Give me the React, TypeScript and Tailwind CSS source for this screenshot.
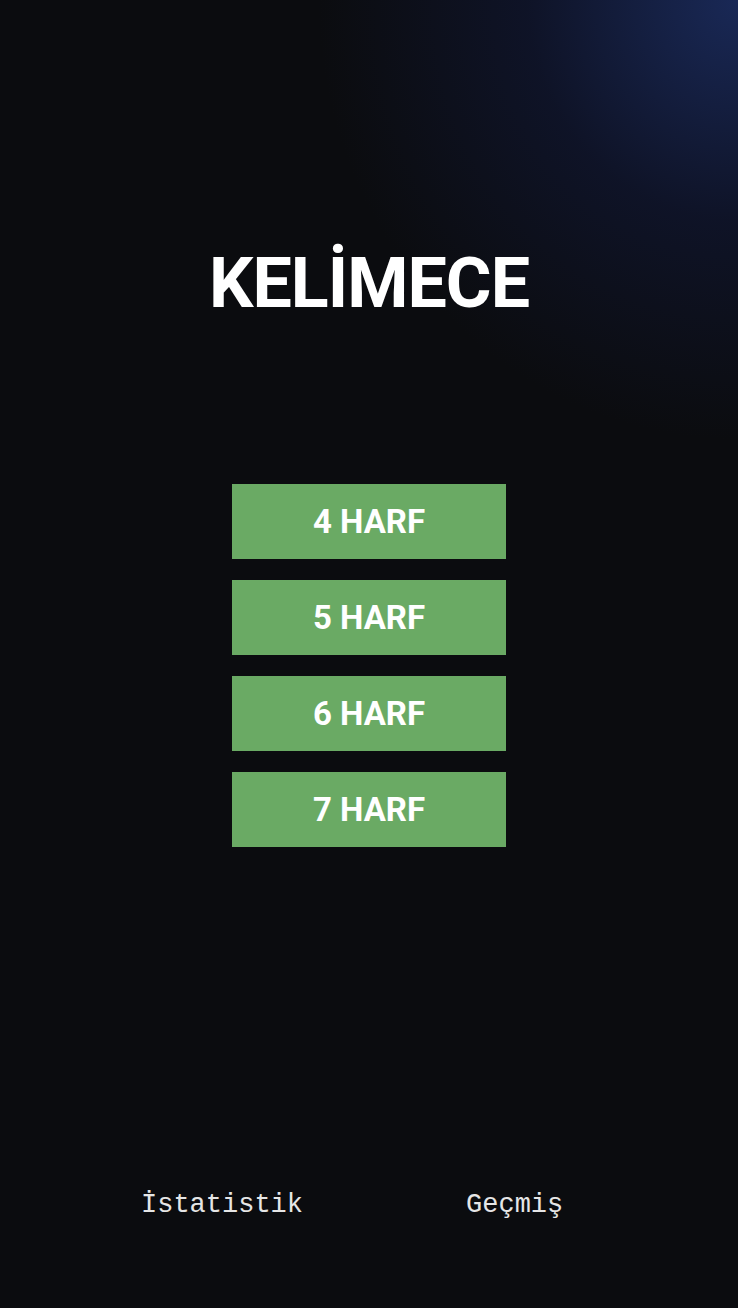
import React from "react";

export default function App() {
  const sizes = [4, 5, 6, 7];
  return (
    <div
      className="relative w-[738px] h-[1308px] overflow-hidden bg-[#0b0c0f] flex flex-col items-center"
      style={{ fontFamily: "Roboto, 'Liberation Sans', sans-serif" }}
    >
      <div className="pointer-events-none absolute inset-0 bg-[radial-gradient(ellipse_420px_440px_at_738px_0px,rgba(30,50,110,0.75),rgba(20,30,75,0.4)_50%,rgba(11,12,15,0)_100%)]" />
      <h1 className="relative mt-[237px] text-[70px] leading-[92px] font-bold text-white tracking-[-1px]">
        KELİMECE
      </h1>
      <div className="relative mt-[155px] flex flex-col gap-[21px]">
        {sizes.map((n) => (
          <button
            key={n}
            className="w-[274px] h-[75px] bg-[#6aaa64] text-white text-[33px] font-bold flex items-center justify-center"
          >
            {n} HARF
          </button>
        ))}
      </div>
      <div
        className="relative mt-auto mb-[83px] self-start pl-[141px] flex gap-[163px] text-[27px] text-[#e6e6e6]"
        style={{ fontFamily: "'Liberation Mono', 'Courier New', monospace" }}
      >
        <span>İstatistik</span>
        <span>Geçmiş</span>
      </div>
    </div>
  );
}
